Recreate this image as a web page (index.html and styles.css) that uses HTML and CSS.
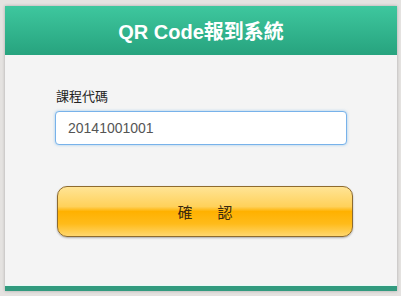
FILE: index.html
```html
<!DOCTYPE html>
<html lang="zh-Hant">
<head>
<meta charset="utf-8">
<title>QR Code報到系統</title>
<link rel="stylesheet" href="styles.css">
</head>
<body>
<div class="panel">
  <header class="panel-header">QR Code報到系統</header>
  <main class="panel-body">
    <label class="field-label" for="code">課程代碼</label>
    <input class="field-input" id="code" type="text" value="20141001001">
    <button class="confirm-btn" type="button">確　認</button>
  </main>
  <footer class="panel-footer"></footer>
</div>
</body>
</html>
```
FILE: styles.css
```css
html, body {
  margin: 0;
  padding: 0;
}
body {
  background: #e4e2e0;
  padding: 6px 4px 5px 5px;
  font-family: "Liberation Sans", "Noto Sans CJK TC", sans-serif;
  box-sizing: border-box;
  height: 296px;
}
.panel {
  width: 392px;
  height: 285px;
  background: #f4f4f4;
  box-shadow: 0 0 3px rgba(0,0,0,0.25);
  display: flex;
  flex-direction: column;
}
.panel-header {
  height: 49px;
  flex: none;
  background: linear-gradient(#3ec79e, #27a37e);
  color: #fff;
  font-weight: bold;
  font-size: 20px;
  display: flex;
  align-items: center;
  justify-content: center;
  box-sizing: border-box;
}
.panel-body {
  flex: 1;
  display: flex;
  flex-direction: column;
  align-items: flex-start;
  padding: 33px 0 0 50px;
}
.field-label {
  font-family: "Noto Sans CJK TC", sans-serif;
  font-size: 13px;
  line-height: 16px;
  color: #222;
  margin-left: 1px;
}
.field-input {
  margin-top: 7px;
  width: 292px;
  height: 34px;
  box-sizing: border-box;
  border: 1px solid #78b2ea;
  border-radius: 4px;
  box-shadow: 0 0 3px rgba(102,175,233,0.6);
  background: #fff;
  padding: 0 12px;
  font-family: "Liberation Sans", sans-serif;
  font-size: 14px;
  color: #555;
  outline: none;
}
.confirm-btn {
  margin: 41px 0 0 2px;
  width: 296px;
  height: 51px;
  box-sizing: border-box;
  border: 1px solid #8e6b2e;
  border-radius: 10px;
  background: linear-gradient(#ffe495 0%, #ffd15a 40%, #ffb100 50%, #ffbb1a 75%, #ffd76e 100%);
  box-shadow: 0 1px 2px rgba(0,0,0,0.3);
  font-family: "Noto Sans CJK TC", sans-serif;
  font-size: 15px;
  letter-spacing: 5px;
  padding: 0 0 0 5px;
  color: #3a2a10;
}
.panel-footer {
  height: 5px;
  flex: none;
  background: #329a7e;
  border-top: 1px solid #e6fbf6;
}
```
